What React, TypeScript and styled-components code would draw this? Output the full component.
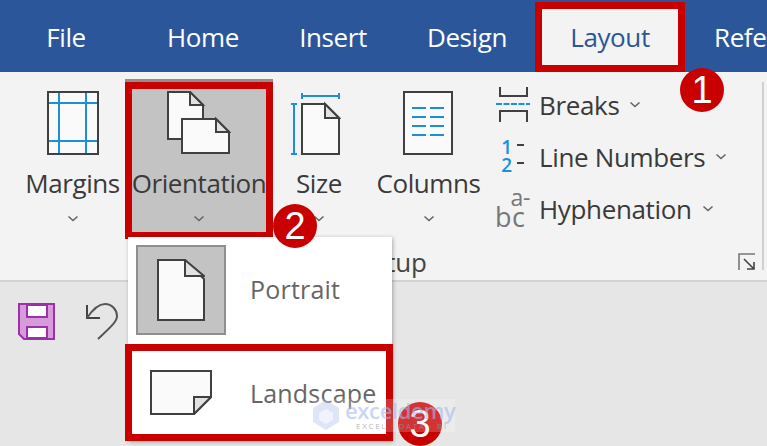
import styled, { createGlobalStyle } from "styled-components";

const Global = createGlobalStyle`
  html, body {
    margin: 0;
    padding: 0;
    background: #e6e6e6;
  }
  * {
    box-sizing: border-box;
  }
`;

const RED = "#c80000";

const Page = styled.div`
  position: relative;
  width: 767px;
  height: 446px;
  overflow: hidden;
  background: #e6e6e6;
  font-family: "Open Sans", "Noto Sans", sans-serif;
  color: #3a3a3a;
`;

const TabBar = styled.div`
  display: flex;
  height: 72px;
  background: #2b579a;
  overflow: hidden;
`;

const Tab = styled.div<{ $width: number; $active?: boolean; $inset?: number }>`
  flex: none;
  display: flex;
  align-items: center;
  justify-content: center;
  width: ${(p) => p.$width}px;
  height: ${(p) => (p.$active ? "70px" : "76px")};
  margin-top: ${(p) => (p.$active ? "2px" : "0")};
  padding: 0 0 ${(p) => (p.$active ? "0" : "2px")} ${(p) => p.$inset ?? 0}px;
  font-size: 26px;
  letter-spacing: -0.4px;
  color: ${(p) => (p.$active ? "#2b579a" : "#fff")};
  background: ${(p) => (p.$active ? "#f3f3f3" : "transparent")};
  border: ${(p) => (p.$active ? `7px solid ${RED}` : "none")};
`;

const ClippedTab = styled(Tab)`
  justify-content: flex-start;
  margin-left: 29px;
`;

const Ribbon = styled.div`
  display: flex;
  flex-direction: column;
  height: 210px;
  padding: 10px 0 0 20px;
  background: #f3f3f3;
  border-bottom: 2px solid #d2d2d2;
`;

const Tools = styled.div`
  display: flex;
  align-items: flex-start;
  height: 157px;
`;

const LargeButton = styled.div<{ $width: number; $selected?: boolean }>`
  flex: none;
  display: flex;
  flex-direction: column;
  align-items: center;
  width: ${(p) => p.$width}px;
  height: 157px;
  padding-top: ${(p) => (p.$selected ? "2px" : "9px")};
  background: ${(p) => (p.$selected ? "#c3c3c3" : "transparent")};
  border: ${(p) => (p.$selected ? `7px solid ${RED}` : "none")};
  box-shadow: ${(p) => (p.$selected ? "0 -3px 0 #8f8f8f" : "none")};
`;

const IconSlot = styled.div`
  flex: none;
  height: 64px;
  display: flex;
  align-items: flex-start;
  justify-content: center;
`;

const SizeSlot = styled(IconSlot)`
  padding-right: 7px;
`;

const ColumnsSlot = styled(IconSlot)`
  padding-right: 2px;
`;

const LargeLabel = styled.div`
  margin-top: 11px;
  font-size: 26px;
  line-height: 34px;
  letter-spacing: -0.4px;
  white-space: nowrap;
`;

const Chevron = styled.svg`
  flex: none;
  display: block;
  width: 12px;
  height: 7px;
`;

const LargeChevron = styled(Chevron)`
  margin-top: 15px;
`;

const SmallColumn = styled.div`
  display: flex;
  flex-direction: column;
  gap: 11px;
  margin: 2px 0 0 3px;
`;

const SmallButton = styled.div`
  display: flex;
  align-items: center;
  gap: 8px;
  height: 41px;
  font-size: 26px;
  letter-spacing: -0.35px;
  white-space: nowrap;
`;

const SmallIcon = styled.div`
  flex: none;
  width: 36px;
  height: 36px;
`;

const NumbersIcon = styled(SmallIcon)`
  display: flex;
  flex-direction: column;
  justify-content: center;
  gap: 1px;
  padding-left: 5px;
`;

const NumberRow = styled.div`
  display: flex;
  align-items: center;
  gap: 4px;
  height: 17px;
`;

const NumberDigit = styled.span`
  width: 13px;
  text-align: center;
  font-size: 19px;
  line-height: 17px;
  font-weight: 600;
  color: #1c8fd8;
`;

const NumberDash = styled.span`
  width: 7px;
  height: 2px;
  margin-top: -6px;
  background: #404040;
`;

const HyphenIcon = styled(SmallIcon)`
  display: flex;
  flex-direction: column;
  line-height: 1;
  color: #777;
  margin-top: -8px;
`;

const HyphenTop = styled.span`
  align-self: flex-end;
  height: 17px;
  margin-right: 1px;
  font-size: 23px;
  line-height: 20px;
`;

const HyphenBottom = styled.span`
  font-size: 27px;
  line-height: 26px;
  letter-spacing: 0.5px;
`;

const SmallChevron = styled(Chevron)`
  margin-left: 2px;
`;

const GroupFooter = styled.div`
  display: flex;
  align-items: center;
  justify-content: space-between;
  height: 40px;
  padding: 6px 11px 0 274px;
`;

const GroupLabel = styled.div`
  font-size: 26px;
  letter-spacing: -0.3px;
  color: #444;
`;

const Separator = styled.div`
  position: absolute;
  left: 762px;
  top: 82px;
  width: 2px;
  height: 188px;
  background: #d0d0d0;
`;

const QuickAccess = styled.div`
  display: flex;
  align-items: center;
  gap: 30px;
  padding: 20px 0 0 18px;
`;

const Menu = styled.div`
  position: absolute;
  left: 128px;
  top: 237px;
  width: 264px;
  height: 204px;
  padding: 8px 0 0 8px;
  background: #fff;
  box-shadow: 1px 1px 4px rgba(0, 0, 0, 0.3);
`;

const MenuItem = styled.div`
  display: flex;
  align-items: center;
  font-size: 25px;
  letter-spacing: 0.2px;
  color: #666;
`;

const PortraitItem = styled(MenuItem)`
  line-height: 88px;
  align-items: flex-start;
`;

const PortraitThumb = styled.div`
  flex: none;
  display: flex;
  align-items: center;
  justify-content: center;
  width: 90px;
  height: 90px;
  margin-right: 24px;
  background: #c3c3c3;
  border: 2px solid #8f8f8f;
`;

const LandscapeItem = styled(MenuItem)`
  width: 268px;
  height: 97px;
  margin: 9px 0 0 -11px;
  padding-left: 18px;
  border: 7px solid ${RED};
  background: #fff;
`;

const LandscapeIcon = styled.svg`
  flex: none;
  width: 62px;
  height: 45px;
  margin-right: 38px;
`;

const Badge = styled.div<{ $x: number; $y: number }>`
  position: absolute;
  left: ${(p) => p.$x - 22}px;
  top: ${(p) => p.$y - 22}px;
  width: 44px;
  height: 44px;
  display: flex;
  align-items: center;
  justify-content: center;
  border-radius: 50%;
  background: ${RED};
  color: #fff;
  font-family: "Liberation Sans", sans-serif;
  font-size: 38px;
`;

const Watermark = styled.div`
  position: absolute;
  left: 312px;
  top: 399px;
  width: 143px;
  height: 33px;
  display: flex;
  gap: 5px;
  background: rgba(255, 255, 255, 0.2);
`;

const WatermarkMark = styled.svg`
  flex: none;
  width: 28px;
  height: 32px;
`;

const WatermarkText = styled.div`
  display: flex;
  flex-direction: column;
  align-items: flex-start;
`;

const WatermarkName = styled.span`
  font-size: 22px;
  line-height: 22px;
  letter-spacing: -0.35px;
  font-weight: 600;
  color: rgba(165, 185, 235, 0.6);
`;

const WatermarkSub = styled.span`
  font-size: 8px;
  line-height: 10px;
  letter-spacing: 1.7px;
  margin-left: 11px;
  color: rgba(150, 150, 150, 0.7);
`;

const STROKE = "#404040";
const BLUE = "#1c8fd8";
const PAPER = "#fafafa";
const FOLD = "#e2e2e2";

const ChevronGlyph = ({ as: Comp = Chevron }: { as?: typeof Chevron }) => (
  <Comp viewBox="0 0 12 7">
    <path d="M1.5 1.5 6 5.5 10.5 1.5" fill="none" stroke="#666" strokeWidth="1.6" />
  </Comp>
);

const MarginsIcon = () => (
  <svg width="52" height="64" viewBox="0 0 52 64">
    <rect x="1" y="1" width="50" height="62" fill={PAPER} stroke={STROKE} strokeWidth="2" />
    <path d="M12 2V62M39 2V62M2 12H50M2 50H50" stroke={BLUE} strokeWidth="2" fill="none" />
  </svg>
);

const OrientationIcon = () => (
  <svg width="64" height="64" viewBox="0 0 64 64">
    <path d="M1 1H23L36 14V48H1Z" fill={PAPER} stroke={STROKE} strokeWidth="2" />
    <path d="M23 1V14H36Z" fill={FOLD} stroke={STROKE} strokeWidth="2" />
    <path d="M15 28H49L62 41V62H15Z" fill={PAPER} stroke={STROKE} strokeWidth="2" />
    <path d="M49 28V41H62Z" fill={FOLD} stroke={STROKE} strokeWidth="2" />
  </svg>
);

const SizeIcon = () => (
  <svg width="50" height="64" viewBox="0 0 50 64">
    <path d="M11 5H48M11 2V8M48 2V8" stroke={BLUE} strokeWidth="2" fill="none" />
    <path d="M3 13V63M0 13H6M0 63H6" stroke={BLUE} strokeWidth="2" fill="none" />
    <path d="M11 13H34L48 27V63H11Z" fill={PAPER} stroke={STROKE} strokeWidth="2" />
    <path d="M34 13V27H48Z" fill={FOLD} stroke={STROKE} strokeWidth="2" />
  </svg>
);

const ColumnsIcon = () => (
  <svg width="50" height="64" viewBox="0 0 50 64">
    <rect x="1" y="1" width="48" height="62" fill={PAPER} stroke={STROKE} strokeWidth="2" />
    <path
      d="M9 17H23M27 17H41M9 26H23M27 26H41M9 35H23M27 35H41M9 44H23M27 44H41"
      stroke={BLUE}
      strokeWidth="2"
      fill="none"
    />
  </svg>
);

const BreaksIcon = () => (
  <svg width="36" height="36" viewBox="0 0 36 36">
    <path d="M5 0V9H32V0M5 35V24H32V35" fill="none" stroke={STROKE} strokeWidth="2" />
    <path d="M1 17H35" stroke={BLUE} strokeWidth="2" strokeDasharray="6 1.5" />
  </svg>
);

const SaveIcon = () => (
  <svg width="37" height="37" viewBox="0 0 37 37">
    <path d="M1 1H36V36H6L1 31Z" fill="#d79bdc" stroke="#9c30a8" strokeWidth="2" />
    <path d="M9 2V14H29V2Z" fill="#fff" stroke="#9c30a8" strokeWidth="2" />
    <path d="M9 35V24H29V35Z" fill="#fff" stroke="#9c30a8" strokeWidth="2" />
  </svg>
);

const UndoIcon = () => (
  <svg width="34" height="38" viewBox="0 0 34 38">
    <path d="M2 3V16H15" stroke="#444" strokeWidth="2" fill="none" />
    <path d="M2 16C8 7 14 2 20 2 27 2 32 8 32 14 32 19 28 23 13 37" stroke="#555" strokeWidth="2" fill="none" />
  </svg>
);

const PortraitIcon = () => (
  <svg width="48" height="62" viewBox="0 0 48 62">
    <path d="M1 1H28L47 20V61H1Z" fill={PAPER} stroke={STROKE} strokeWidth="2" />
    <path d="M28 1V17H47Z" fill={FOLD} stroke={STROKE} strokeWidth="2" />
  </svg>
);

const LauncherIcon = () => (
  <svg width="18" height="18" viewBox="0 0 18 18">
    <path d="M1 17V1H17" fill="none" stroke="#777" strokeWidth="1.6" />
    <path d="M6 6 16 16M16 9V16H9" fill="none" stroke="#444" strokeWidth="1.6" />
  </svg>
);

const WatermarkLogo = () => (
  <WatermarkMark viewBox="0 0 28 32">
    <path d="M14 1 27 9V23L14 31 1 23V9Z" fill="rgba(170,190,235,0.4)" />
    <path d="M14 10 21 14V21L14 25 7 21V14Z" fill="rgba(255,255,255,0.55)" />
  </WatermarkMark>
);

export default function App() {
  return (
    <Page>
      <Global />
      <TabBar>
        <Tab $width={132}>File</Tab>
        <Tab $width={142}>Home</Tab>
        <Tab $width={118}>Insert</Tab>
        <Tab $width={143} $inset={7}>
          Design
        </Tab>
        <Tab $width={150} $active>
          Layout
        </Tab>
        <ClippedTab $width={100}>References</ClippedTab>
      </TabBar>
      <Ribbon>
        <Tools>
          <LargeButton $width={105}>
            <IconSlot>
              <MarginsIcon />
            </IconSlot>
            <LargeLabel>Margins</LargeLabel>
            <ChevronGlyph as={LargeChevron} />
          </LargeButton>
          <LargeButton $width={148} $selected>
            <IconSlot>
              <OrientationIcon />
            </IconSlot>
            <LargeLabel>Orientation</LargeLabel>
            <ChevronGlyph as={LargeChevron} />
          </LargeButton>
          <LargeButton $width={92}>
            <SizeSlot>
              <SizeIcon />
            </SizeSlot>
            <LargeLabel>Size</LargeLabel>
            <ChevronGlyph as={LargeChevron} />
          </LargeButton>
          <LargeButton $width={127}>
            <ColumnsSlot>
              <ColumnsIcon />
            </ColumnsSlot>
            <LargeLabel>Columns</LargeLabel>
            <ChevronGlyph as={LargeChevron} />
          </LargeButton>
          <SmallColumn>
            <SmallButton>
              <SmallIcon>
                <BreaksIcon />
              </SmallIcon>
              Breaks
              <ChevronGlyph as={SmallChevron} />
            </SmallButton>
            <SmallButton>
              <NumbersIcon>
                <NumberRow>
                  <NumberDigit>1</NumberDigit>
                  <NumberDash />
                </NumberRow>
                <NumberRow>
                  <NumberDigit>2</NumberDigit>
                  <NumberDash />
                </NumberRow>
              </NumbersIcon>
              Line Numbers
              <ChevronGlyph as={SmallChevron} />
            </SmallButton>
            <SmallButton>
              <HyphenIcon>
                <HyphenTop>a-</HyphenTop>
                <HyphenBottom>bc</HyphenBottom>
              </HyphenIcon>
              Hyphenation
              <ChevronGlyph as={SmallChevron} />
            </SmallButton>
          </SmallColumn>
        </Tools>
        <GroupFooter>
          <GroupLabel>Page Setup</GroupLabel>
          <LauncherIcon />
        </GroupFooter>
      </Ribbon>
      <Separator />
      <QuickAccess>
        <SaveIcon />
        <UndoIcon />
      </QuickAccess>
      <Menu>
        <PortraitItem>
          <PortraitThumb>
            <PortraitIcon />
          </PortraitThumb>
          Portrait
        </PortraitItem>
        <LandscapeItem>
          <LandscapeIcon viewBox="0 0 62 45">
            <path d="M1 1H61V27L44 44H1Z" fill={PAPER} stroke={STROKE} strokeWidth="2" />
            <path d="M44 44V27H61Z" fill={FOLD} stroke={STROKE} strokeWidth="2" />
          </LandscapeIcon>
          Landscape
        </LandscapeItem>
      </Menu>
      <Badge $x={702} $y={90}>1</Badge>
      <Badge $x={295} $y={226}>2</Badge>
      <Badge $x={420} $y={424}>3</Badge>
      <Watermark>
        <WatermarkLogo />
        <WatermarkText>
          <WatermarkName>exceldemy</WatermarkName>
          <WatermarkSub>EXCEL · DATA · BI</WatermarkSub>
        </WatermarkText>
      </Watermark>
    </Page>
  );
}
